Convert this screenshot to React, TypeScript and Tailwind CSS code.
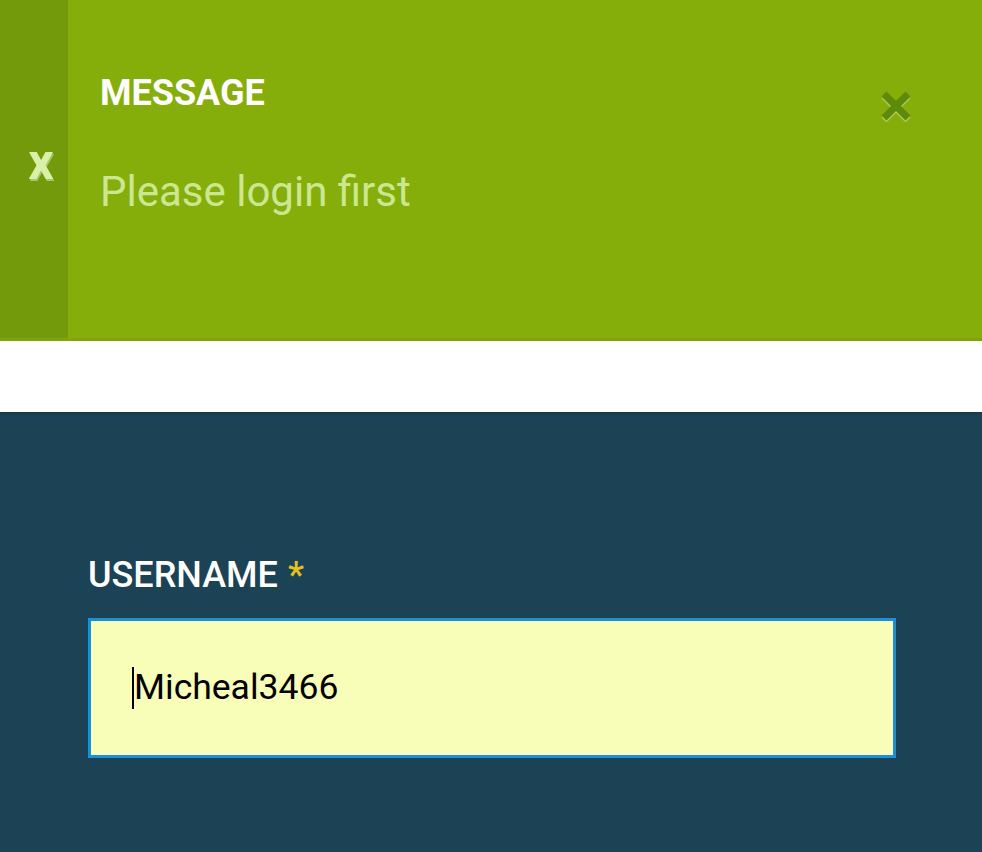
import React from "react";

export default function App() {
  return (
    <div className="w-[982px] h-[852px] bg-white flex flex-col overflow-hidden" style={{ fontFamily: "Roboto, 'Noto Sans', sans-serif" }}>
      <div className="h-[341px] flex bg-[#86ae0b] border-b-[3px] border-[#7fa50b]">
        <div className="w-[68px] bg-[#739a0b] flex items-center justify-center pl-[14px] pb-[14px]">
          <span className="text-[50px] font-bold text-[#d9f0a8] leading-none [text-shadow:1px_2px_0_#a7c76a]">x</span>
        </div>
        <div className="flex-1 flex pl-[32px] pr-[70px] pt-[73px]">
          <div className="flex-1 flex flex-col">
            <div className="text-[36px] font-bold text-white leading-[40px]">MESSAGE</div>
            <div className="mt-[56px] text-[42px] text-[#cbe78f] leading-[46px]">Please login first</div>
          </div>
          <div className="pt-[17px]">
            <svg width="32" height="32" viewBox="0 0 32 32">
              <g stroke="#a9cd50" strokeWidth="7" strokeLinecap="butt">
                <line x1="4" y1="6" x2="28" y2="30" />
                <line x1="28" y1="6" x2="4" y2="30" />
              </g>
              <g stroke="#5e8a0b" strokeWidth="7" strokeLinecap="butt">
                <line x1="4" y1="4" x2="28" y2="28" />
                <line x1="28" y1="4" x2="4" y2="28" />
              </g>
            </svg>
          </div>
        </div>
      </div>
      <div className="h-[71px]" />
      <div className="flex-1 bg-[#1c4255] border-t-2 border-[#17394a] px-[88px] pt-[141px]">
        <div className="flex items-baseline gap-[10px]">
          <span className="text-[36px] font-medium text-white leading-[40px]">USERNAME</span>
          <span className="text-[36px] font-medium text-[#e3c21c] leading-[40px]">*</span>
        </div>
        <div className="mt-[23px] w-[808px] h-[140px] bg-[#f8fdb8] border-[3px] border-[#1a90d8] flex items-center pl-[41px]">
          <span className="w-[2px] h-[42px] bg-black" />
          <span className="text-[35.5px] text-black leading-none">Micheal3466</span>
        </div>
      </div>
    </div>
  );
}
